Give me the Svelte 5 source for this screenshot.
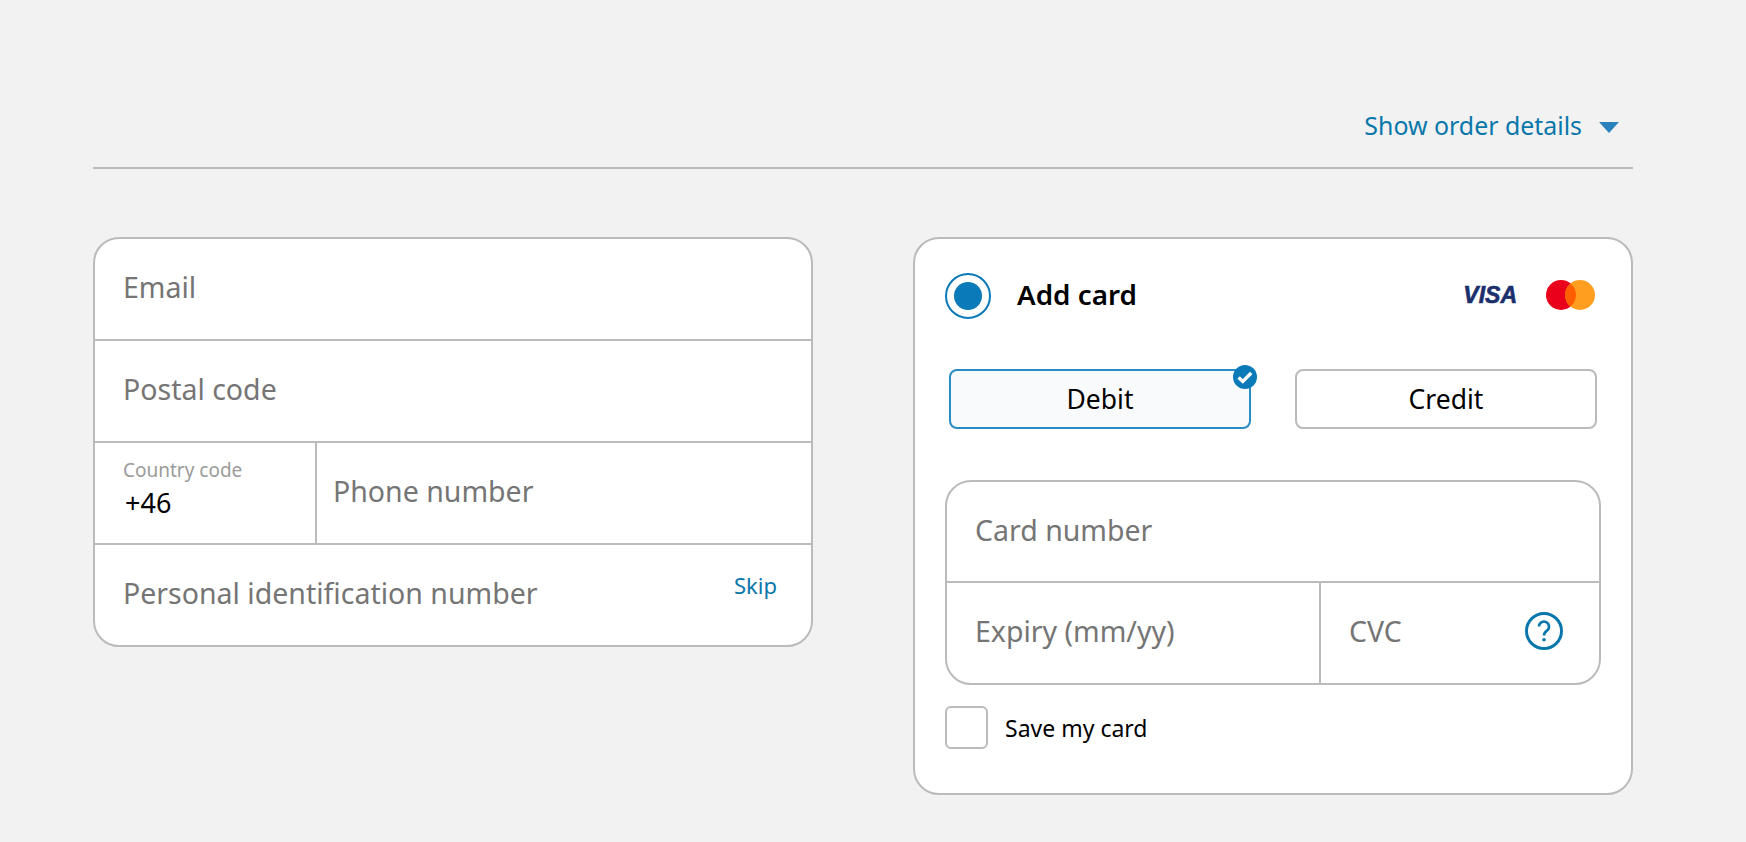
<script>
	const leftRows = ['Email', 'Postal code'];
</script>

<main class="page">
	<header class="order-bar">
		<button class="order-toggle">
			<span>Show order details</span>
			<svg class="caret" width="20" height="11" viewBox="0 0 20 11"><path d="M0 0h20L10 11z" fill="#2a83bb" /></svg>
		</button>
	</header>

	<div class="columns">
		<section class="card contact">
			{#each leftRows as row}
				<div class="row"><span class="ph">{row}</span></div>
			{/each}
			<div class="row phone">
				<div class="code">
					<span class="code-label">Country code</span>
					<span class="code-value">+46</span>
				</div>
				<div class="number"><span class="ph">Phone number</span></div>
			</div>
			<div class="row pin">
				<span class="ph">Personal identification number</span>
				<span class="skip">Skip</span>
			</div>
		</section>

		<section class="card payment">
			<div class="pay-head">
				<span class="radio"><span class="radio-dot"></span></span>
				<span class="pay-title">Add card</span>
				<span class="visa">VISA</span>
				<svg class="mc" width="49" height="30" viewBox="0 0 49 30">
					<circle cx="15" cy="15" r="15" fill="#eb001b" />
					<circle cx="34" cy="15" r="15" fill="#ff9e1f" />
					<path d="M24.5 3.4a15 15 0 0 1 0 23.2a15 15 0 0 1 0-23.2z" fill="#ff5f00" />
				</svg>
			</div>

			<div class="types">
				<div class="type selected">
					Debit
					<svg class="tick" width="24" height="24" viewBox="0 0 24 24">
						<circle cx="12" cy="12" r="12" fill="#0a7bb8" />
						<path d="M5.6 12.4l4.2 4 8.4-8.4" fill="none" stroke="#fff" stroke-width="3.4" />
					</svg>
				</div>
				<div class="type">Credit</div>
			</div>

			<div class="fields">
				<div class="field-row"><span class="ph">Card number</span></div>
				<div class="field-row split">
					<div class="expiry"><span class="ph">Expiry (mm/yy)</span></div>
					<div class="cvc">
						<span class="ph">CVC</span>
						<svg width="38" height="38" viewBox="0 0 38 38">
							<circle cx="19" cy="19" r="17.5" fill="none" stroke="#0a77ab" stroke-width="3" />
							<path d="M14 14.6a5 5 0 1 1 8 4c-2 1.5-3 2.4-3 4.8" fill="none" stroke="#0a77ab" stroke-width="2.6" />
							<circle cx="19" cy="27.8" r="1.8" fill="#0a77ab" />
						</svg>
					</div>
				</div>
			</div>

			<label class="save">
				<span class="box"></span>
				<span>Save my card</span>
			</label>
		</section>
	</div>
</main>

<style>
	:global(body) {
		background: #f2f2f2;
		font-family: 'Noto Sans', 'Open Sans', sans-serif;
	}
	.page {
		padding: 0 113px 0 93px;
		height: 842px;
		box-sizing: border-box;
		overflow: hidden;
	}
	.order-bar {
		height: 169px;
		box-sizing: border-box;
		border-bottom: 2px solid #bbb;
		display: flex;
		justify-content: flex-end;
		align-items: flex-start;
		padding: 106px 14px 0 0;
	}
	.order-toggle {
		display: flex;
		align-items: center;
		gap: 17px;
		background: none;
		border: 0;
		padding: 0;
		color: #0a77ab;
		font: inherit;
		font-size: 24.9px;
		line-height: 38px;
	}
	.caret {
		margin-top: 5px;
	}
	.columns {
		display: flex;
		align-items: flex-start;
		gap: 100px;
		margin-top: 68px;
	}
	.card {
		box-sizing: border-box;
		width: 720px;
		background: #fff;
		border: 2px solid #bbb;
		border-radius: 26px;
	}
	.row {
		height: 102px;
		box-sizing: border-box;
		border-bottom: 2px solid #bbb;
		display: flex;
		align-items: center;
		padding: 0 0 4px 28px;
	}
	.row:last-child {
		height: 100px;
		border-bottom: 0;
	}
	.ph {
		color: #757575;
		font-size: 28.5px;
	}
	.phone {
		padding: 0;
		align-items: stretch;
	}
	.code {
		width: 222px;
		box-sizing: border-box;
		border-right: 2px solid #bbb;
		padding: 14px 0 0 28px;
		display: flex;
		flex-direction: column;
	}
	.code-label {
		color: #9b9b9b;
		font-size: 19px;
		line-height: 26px;
	}
	.code-value {
		color: #000;
		font-size: 27px;
		line-height: 40px;
		margin-left: 2px;
	}
	.number {
		display: flex;
		align-items: center;
		padding: 0 0 4px 16px;
	}
	.pin {
		justify-content: space-between;
		padding-right: 34px;
	}
	.skip {
		color: #0a77ab;
		font-size: 22px;
		margin-bottom: 16px;
	}
	.payment {
		height: 558px;
		padding: 34px 30px 0 30px;
	}
	.pay-head {
		display: flex;
		align-items: center;
		height: 46px;
	}
	.radio {
		box-sizing: border-box;
		width: 46px;
		height: 46px;
		border: 2px solid #0a7bb8;
		border-radius: 50%;
		display: flex;
		align-items: center;
		justify-content: center;
	}
	.radio-dot {
		width: 28px;
		height: 28px;
		border-radius: 50%;
		background: #0a7bb8;
	}
	.pay-title {
		flex: 1;
		margin: 0 0 4px 26px;
		color: #000;
		font-size: 27.8px;
		font-weight: 600;
	}
	.visa {
		color: #1a2f6b;
		font-family: 'Liberation Sans', sans-serif;
		font-size: 23px;
		font-weight: 700;
		font-style: italic;
		-webkit-text-stroke: 0.6px #1a2f6b;
		margin-bottom: 2px;
	}
	.mc {
		margin: 0 6px 2px 29px;
	}
	.types {
		display: flex;
		justify-content: space-between;
		margin: 50px 4px 0 4px;
	}
	.type {
		position: relative;
		box-sizing: border-box;
		width: 302px;
		height: 60px;
		border: 2px solid #bbb;
		border-radius: 8px;
		display: flex;
		align-items: center;
		justify-content: center;
		color: #000;
		font-size: 26.5px;
	}
	.selected {
		border-color: #2a8cc4;
		background: #f8fafc;
	}
	.tick {
		position: absolute;
		top: -6px;
		right: -8px;
	}
	.fields {
		margin-top: 51px;
		border: 2px solid #bbb;
		border-radius: 26px;
	}
	.field-row {
		height: 101px;
		box-sizing: border-box;
		border-bottom: 2px solid #bbb;
		display: flex;
		align-items: center;
		padding: 0 0 4px 28px;
	}
	.split {
		height: 100px;
		padding: 0;
		border-bottom: 0;
		align-items: stretch;
	}
	.expiry {
		width: 374px;
		box-sizing: border-box;
		border-right: 2px solid #bbb;
		padding: 0 0 4px 28px;
		display: flex;
		align-items: center;
	}
	.cvc {
		flex: 1;
		display: flex;
		align-items: center;
		justify-content: space-between;
		padding: 0 36px 4px 28px;
	}
	.save {
		display: flex;
		align-items: center;
		gap: 17px;
		margin-top: 21px;
		color: #000;
		font-size: 23px;
	}
	.box {
		box-sizing: border-box;
		width: 43px;
		height: 43px;
		border: 2px solid #bbb;
		border-radius: 6px;
	}
</style>
